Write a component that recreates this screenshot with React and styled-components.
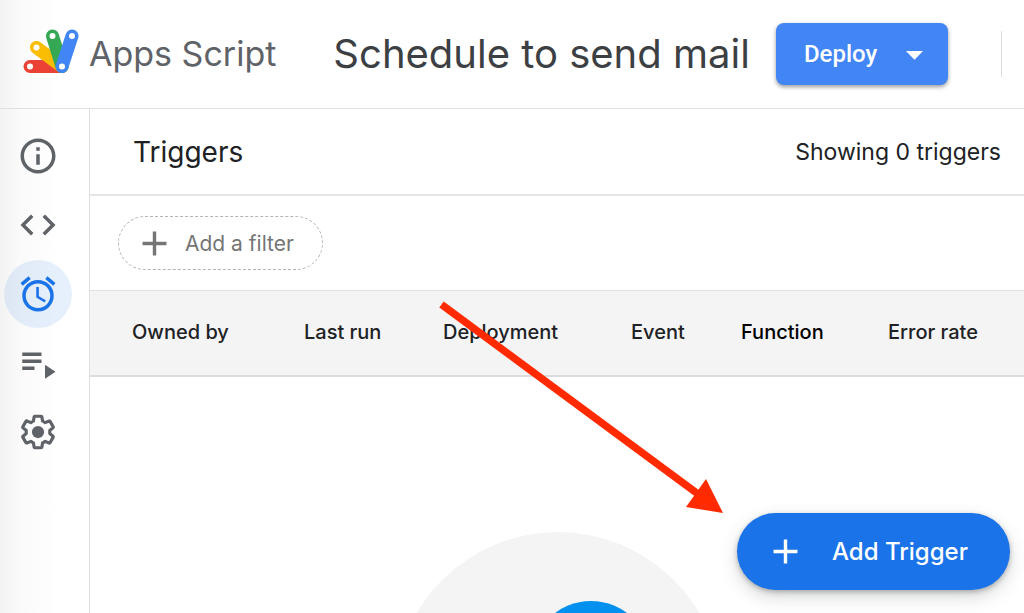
import styled, { createGlobalStyle, ThemeProvider } from 'styled-components';
import {
  MdAdd,
  MdAlarm,
  MdArrowDropDown,
  MdCode,
  MdInfoOutline,
  MdPlaylistPlay,
} from 'react-icons/md';

const theme = {
  font: "Inter, 'Liberation Sans', sans-serif",
  color: {
    text: '#202124',
    title: '#3c4043',
    muted: '#5f6368',
    filter: '#757575',
    line: '#dfe0e3',
    surface: '#f4f4f4',
    blue: '#1a73e8',
    deploy: '#4285f4',
  },
};

const columns = [
  { label: 'Owned by', width: 172 },
  { label: 'Last run', width: 139 },
  { label: 'Deployment', width: 188 },
  { label: 'Event', width: 110 },
  { label: 'Function', width: 147, sorted: true },
  { label: 'Error rate' },
];

const navItems = [
  { label: 'Overview', icon: <MdInfoOutline /> },
  { label: 'Editor', icon: <MdCode /> },
  { label: 'Triggers', icon: <MdAlarm />, active: true },
  { label: 'Executions', icon: <MdPlaylistPlay /> },
  { label: 'Project Settings', icon: <GearIcon /> },
];

function Logo() {
  return (
    <LogoSvg viewBox="0 0 56 44" aria-hidden="true">
      <g strokeWidth="13" strokeLinecap="round">
        <path d="M7 37.5h32" stroke="#ea4335" />
        <path d="M13.5 18.5l25.5 19" stroke="#fbbc04" />
        <path d="M29.5 7l9.5 30.5" stroke="#34a853" />
        <path d="M49 7l-10 30.5" stroke="#4285f4" />
      </g>
      <g fill="#fff">
        <circle cx="7" cy="37.5" r="3" />
        <circle cx="13.5" cy="18.5" r="3" />
        <circle cx="29.5" cy="7" r="3" />
        <circle cx="49" cy="7" r="3" />
        <circle cx="39" cy="37.5" r="3" />
      </g>
    </LogoSvg>
  );
}

function GearIcon() {
  return (
    <svg viewBox="0 0 24 24" width="1em" height="1em" fill="currentColor">
      <path
        transform="translate(1.2 1.2) scale(.9)"
        fill="none"
        stroke="currentColor"
        strokeWidth="2"
        strokeLinejoin="round"
        d="M19.43 12.98c.04-.32.07-.64.07-.98s-.03-.66-.07-.98l2.11-1.65c.19-.15.24-.42.12-.64l-2-3.46c-.12-.22-.39-.3-.61-.22l-2.49 1c-.52-.4-1.08-.73-1.69-.98l-.38-2.65C14.46 2.18 14.25 2 14 2h-4c-.25 0-.46.18-.49.42l-.38 2.65c-.61.25-1.17.59-1.69.98l-2.49-1c-.23-.09-.49 0-.61.22l-2 3.46c-.13.22-.07.49.12.64l2.11 1.65c-.04.32-.07.65-.07.98s.03.66.07.98l-2.11 1.65c-.19.15-.24.42-.12.64l2 3.46c.12.22.39.3.61.22l2.49-1c.52.4 1.08.73 1.69.98l.38 2.65c.03.24.24.42.49.42h4c.25 0 .46-.18.49-.42l.38-2.65c.61-.25 1.17-.59 1.69-.98l2.49 1c.23.09.49 0 .61-.22l2-3.46c.12-.22.07-.49-.12-.64l-2.11-1.65z"
      />
      <circle cx="12" cy="12" r="3.5" />
    </svg>
  );
}

function EmptyState() {
  return (
    <Empty>
      <svg viewBox="0 0 328 328" width="328" height="328" aria-hidden="true">
        <circle cx="165" cy="164" r="164" fill="#f4f4f4" />
        <circle cx="198" cy="129" r="60" fill="#0390ee" />
      </svg>
    </Empty>
  );
}

function Arrow() {
  return (
    <ArrowSvg viewBox="0 0 284 212" aria-hidden="true">
      <path d="M1.5 3.5L258 193" stroke="#ff2a00" strokeWidth="7.5" />
      <path d="M266 178L283 212L246 206z" fill="#ff2a00" />
    </ArrowSvg>
  );
}

export default function App() {
  return (
    <ThemeProvider theme={theme}>
      <GlobalStyle />
      <Page>
        <Header>
          <Brand href="#home">
            <Logo />
            Apps Script
          </Brand>
          <ProjectName>Schedule to send mail</ProjectName>
          <DeployButton type="button">
            Deploy
            <MdArrowDropDown />
          </DeployButton>
          <Divider />
        </Header>

        <Body>
          <Sidebar>
            {navItems.map(item => (
              <NavLink
                key={item.label}
                href="#nav"
                aria-label={item.label}
                $active={item.active}
              >
                {item.icon}
              </NavLink>
            ))}
          </Sidebar>

          <Main>
            <TitleBar>
              <Title>Triggers</Title>
              <Count>Showing 0 triggers</Count>
            </TitleBar>
            <FilterBar>
              <FilterButton type="button">
                <MdAdd />
                Add a filter
              </FilterButton>
            </FilterBar>
            <Table>
              <thead>
                <tr>
                  {columns.map(col => (
                    <HeadCell
                      key={col.label}
                      scope="col"
                      $width={col.width}
                      $sorted={col.sorted}
                    >
                      {col.label}
                    </HeadCell>
                  ))}
                </tr>
              </thead>
            </Table>
            <EmptyState />
          </Main>
        </Body>

        <Arrow />
        <AddButton type="button">
          <MdAdd />
          Add Trigger
        </AddButton>
      </Page>
    </ThemeProvider>
  );
}

const GlobalStyle = createGlobalStyle`
  * {
    box-sizing: border-box;
  }
  body {
    margin: 0;
    font-family: ${({ theme }) => theme.font};
    color: ${({ theme }) => theme.color.text};
  }
  button {
    font-family: inherit;
    cursor: pointer;
  }
  svg {
    flex-shrink: 0;
  }
`;

const Page = styled.div`
  position: relative;
  display: flex;
  flex-direction: column;
  height: 100vh;
  overflow: hidden;
  background: linear-gradient(to right, #f3f3f3, #fafafa 20px, #fff 56px);
`;

const Header = styled.header`
  display: flex;
  align-items: center;
  padding: 23px 22px 23px 23px;
  border-bottom: 1px solid ${({ theme }) => theme.color.line};
`;

const Brand = styled.a`
  display: flex;
  align-items: center;
  gap: 10px;
  margin-right: 57px;
  color: ${({ theme }) => theme.color.muted};
  font-size: 34px;
  line-height: 40px;
  text-decoration: none;
  white-space: nowrap;
`;

const LogoSvg = styled.svg`
  width: 56px;
  height: 44px;
  margin-bottom: 6px;
  fill: none;
`;

const ProjectName = styled.div`
  color: ${({ theme }) => theme.color.title};
  font-size: 40px;
  line-height: 48px;
  white-space: nowrap;
`;

const DeployButton = styled.button`
  display: flex;
  align-items: center;
  gap: 17px;
  height: 62px;
  margin-left: 26px;
  padding: 0 13px 0 28px;
  border: 0;
  border-radius: 8px;
  background: ${({ theme }) => theme.color.deploy};
  box-shadow: 0 2px 4px rgba(0, 0, 0, 0.4);
  color: #fff;
  && {
    font-family: Roboto, sans-serif;
  }
  font-size: 24px;
  font-weight: 500;

  svg {
    font-size: 41px;
  }
`;

const Divider = styled.div`
  width: 1px;
  height: 46px;
  margin-left: auto;
  background: #dadce0;
`;

const Body = styled.div`
  display: flex;
  flex: 1;
  min-height: 0;
`;

const Sidebar = styled.nav`
  display: flex;
  flex-direction: column;
  gap: 1px;
  width: 90px;
  padding: 13px 4px;
  border-right: 1px solid ${({ theme }) => theme.color.line};
`;

const NavLink = styled.a`
  display: flex;
  align-items: center;
  justify-content: center;
  width: 68px;
  height: 68px;
  border-radius: 50%;
  background: ${({ $active }) =>
    $active ? 'rgba(26, 115, 232, 0.11)' : 'transparent'};
  color: ${({ $active, theme }) =>
    $active ? theme.color.blue : theme.color.muted};
  font-size: 42px;
`;

const Main = styled.main`
  flex: 1;
  min-width: 0;
`;

const TitleBar = styled.div`
  display: flex;
  align-items: center;
  justify-content: space-between;
  height: 87px;
  padding: 0 23px 0 43px;
  border-bottom: 2px solid #e6e6e8;
`;

const Title = styled.h1`
  margin: 0;
  font-size: 28px;
  font-weight: 400;
`;

const Count = styled.span`
  font-size: 23px;
`;

const FilterBar = styled.div`
  padding: 20px 28px;
`;

const FilterButton = styled.button`
  display: flex;
  align-items: center;
  gap: 10px;
  height: 54px;
  padding: 0 28px 0 15px;
  border: 1px dashed #b4b4b4;
  border-radius: 27px;
  background: transparent;
  color: ${({ theme }) => theme.color.filter};
  font-size: 21px;

  svg {
    font-size: 41px;
  }
`;

const Table = styled.table`
  width: 100%;
  table-layout: fixed;
  border-collapse: separate;
  border-spacing: 0;
  border-top: 1px solid ${({ theme }) => theme.color.line};
  border-bottom: 2px solid #dadce0;
  background: ${({ theme }) => theme.color.surface};
`;

const HeadCell = styled.th`
  width: ${({ $width }) => ($width ? `${$width}px` : 'auto')};
  height: 84px;
  padding: 0 0 2px 42px;
  color: ${({ $sorted, theme }) => ($sorted ? '#000' : theme.color.text)};
  font-size: 20px;
  font-weight: 500;
  text-align: left;
  white-space: nowrap;
`;

const Empty = styled.div`
  display: flex;
  justify-content: center;
  padding-top: 155px;
`;

const ArrowSvg = styled.svg`
  position: absolute;
  top: 301px;
  left: 440px;
  width: 284px;
  height: 212px;
  fill: none;
  overflow: visible;
  pointer-events: none;
`;

const AddButton = styled.button`
  position: absolute;
  right: 14px;
  bottom: 23px;
  display: flex;
  align-items: center;
  gap: 26px;
  height: 77px;
  padding: 0 42px 0 28px;
  border: 0;
  border-radius: 39px;
  background: ${({ theme }) => theme.color.blue};
  box-shadow: 0 2px 5px rgba(60, 64, 67, 0.35), 0 7px 18px rgba(60, 64, 67, 0.2);
  color: #fff;
  font-size: 24px;
  font-weight: 500;

  svg {
    font-size: 41px;
  }
`;
